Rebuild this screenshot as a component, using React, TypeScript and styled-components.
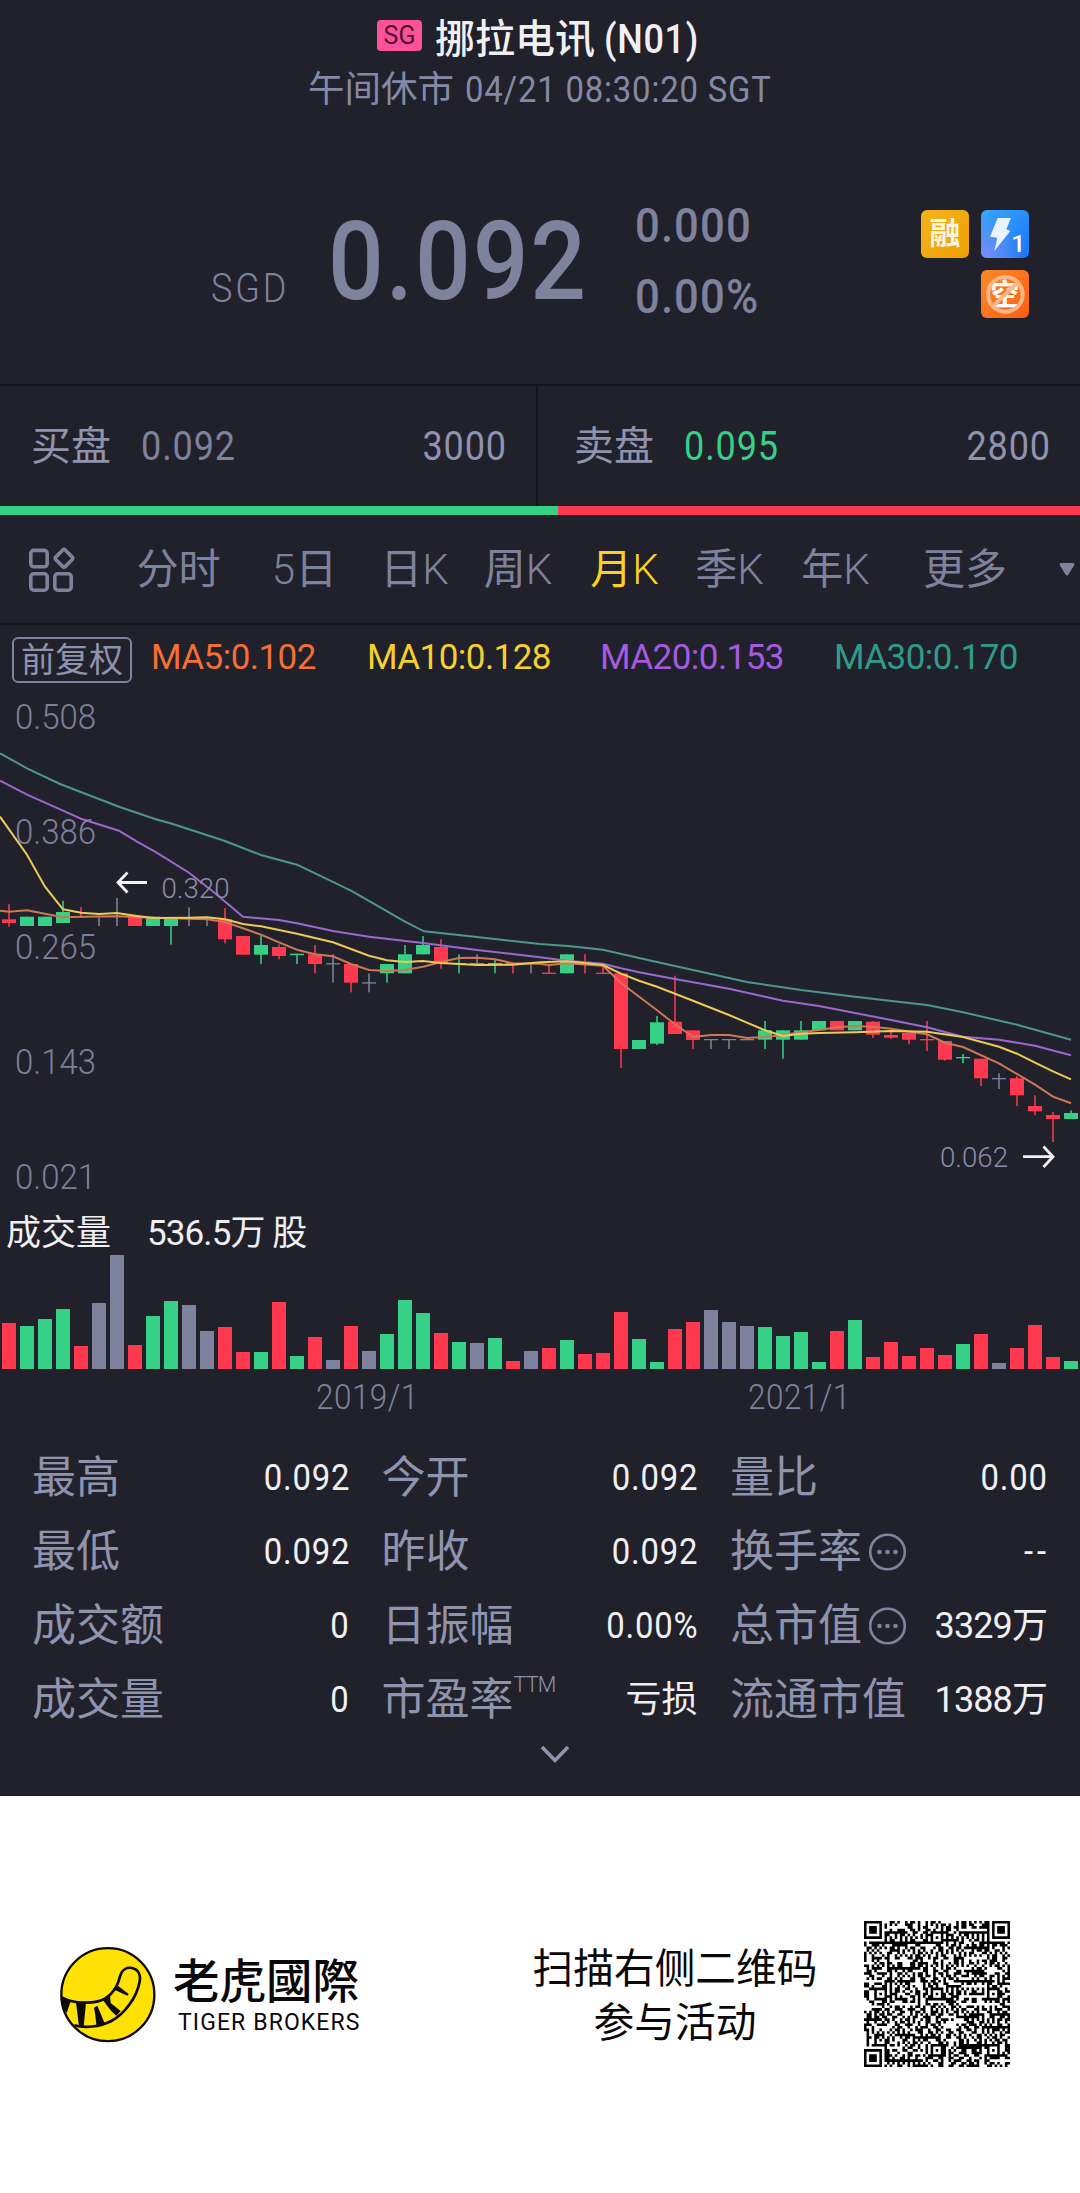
import React from 'react';
import styled, { createGlobalStyle } from 'styled-components';

const colors = {
  bg: '#21212b',
  line: '#15151d',
  muted: '#7f829c',
  label: '#9093ad',
  text: '#f0f0f2',
  up: '#36d086',
  down: '#ff3a50',
  yellow: '#fbd022',
  ma5: '#f26f35',
  ma10: '#f5d02e',
  ma20: '#a45be0',
  ma30: '#2f9c8b',
};

const GlobalStyle = createGlobalStyle`
  body {
    margin: 0;
    background: #fff;
    font-family: Roboto, 'Noto Sans CJK SC', sans-serif;
  }
`;

const Page = styled.div`
  width: 1080px;
  height: 2193px;
  display: flex;
  flex-direction: column;
  overflow: hidden;
  background: #fff;
`;

const Panel = styled.main`
  height: 1796px;
  flex: none;
  display: flex;
  flex-direction: column;
  background: ${colors.bg};
  color: ${colors.muted};
`;

// Narrow figures: squeezed a little and spaced out again
const Digits = styled.span<{ $origin?: string }>`
  display: inline-block;
  transform: scaleX(0.9);
  transform-origin: ${(props) => props.$origin || 'left'} center;
  letter-spacing: 0.025em;
  margin-right: ${(props) => (props.$origin === 'right' ? '-0.025em' : '0')};
`;

/* header */
const Header = styled.header`
  height: 372px;
  flex: none;
  padding-top: 12px;
  border-bottom: 2px solid ${colors.line};
`;
const TitleRow = styled.div`
  display: flex;
  height: 55px;
  padding-left: 377px;
`;
const Market = styled.span`
  width: 45px;
  height: 31px;
  margin: 8px 13px 0 0;
  border-radius: 4px;
  background: #ff5199;
  color: #4d1233;
  font-size: 25px;
  line-height: 31px;
  text-align: center;
`;
const Title = styled.h1`
  display: flex;
  margin: 0;
  font-size: 40px;
  font-weight: 500;
  line-height: 56px;
  color: ${colors.text};
  white-space: pre;
`;
const Code = styled(Digits)`
  margin-left: 9px;
  letter-spacing: 0.02em;
`;
const Status = styled.div`
  padding-left: 308px;
  font-size: 36.5px;
  line-height: 46px;
  color: #8689a5;
  white-space: nowrap;
`;
const StatusTime = styled(Digits)`
  margin-left: 11px;
  letter-spacing: 0.025em;
`;
const Quote = styled.div`
  display: flex;
  align-items: flex-start;
  padding: 77px 51px 0 211px;
`;
const Currency = styled.div`
  width: 117px;
  margin-top: 79px;
  font-size: 40px;
  line-height: 40px;
  font-weight: 300;
`;
const CurrencyCode = styled(Digits)`
  letter-spacing: 0.08em;
`;
const Price = styled.div`
  width: 307px;
  font-size: 109px;
  font-weight: 500;
  line-height: 145px;
`;
const PriceValue = styled(Digits)`
  letter-spacing: 0.02em;
`;
const Changes = styled.div`
  font-size: 48.5px;
  font-weight: 500;
  line-height: 71px;
`;
const Tags = styled.div`
  display: grid;
  grid-template-columns: 48px 48px;
  grid-auto-rows: 48px;
  gap: 12px;
  margin: 20px 0 0 auto;
`;
const Tag = styled.div<{ $from: string; $to: string; $second?: boolean }>`
  grid-column: ${(props) => (props.$second ? 2 : 'auto')};
  border-radius: 6px;
  overflow: hidden;
  background: linear-gradient(135deg, ${(props) => props.$from}, ${(props) => props.$to});
  color: #fff8e0;
  font-size: 31px;
  font-weight: 700;
  line-height: 48px;
  text-align: center;

  svg {
    display: block;
  }
`;

/* bid and ask */
const Depth = styled.section`
  display: grid;
  grid-template-columns: 536px 542px;
  gap: 2px;
  height: 120px;
  background: ${colors.line};
`;
const DepthSide = styled.div<{ $left: number; $right: number }>`
  display: flex;
  align-items: center;
  padding: 0 ${(props) => props.$right}px 7px ${(props) => props.$left}px;
  background: ${colors.bg};
  color: ${colors.label};
  font-size: 40px;
`;
const DepthPrice = styled(Digits)<{ $color: string }>`
  margin: 8px 0 0 30px;
  color: ${(props) => props.$color};
`;
const DepthSize = styled(Digits)`
  margin-top: 8px;
  margin-left: auto;
`;
const DepthBar = styled.div`
  display: grid;
  grid-template-columns: 558px 522px;
  height: 9px;
  flex: none;
`;
const DepthFill = styled.div<{ $color: string }>`
  background: ${(props) => props.$color};
`;

/* period tabs */
const Tabs = styled.nav`
  display: grid;
  grid-template-columns: 102px 153px 99px 121px 86px 127px 83px 129px 130px 50px;
  align-items: center;
  height: 108px;
  flex: none;
  border-bottom: 2px solid ${colors.line};
`;
const Tab = styled.button<{ $active?: boolean }>`
  border: none;
  padding: 2px 0 0;
  background: none;
  font-family: inherit;
  font-size: 42px;
  line-height: 60px;
  white-space: nowrap;
  color: ${(props) => (props.$active ? colors.yellow : colors.muted)};
`;
const Thin = styled.span`
  font-weight: 300;
`;
const GridIcon = styled.svg`
  margin-left: 28px;
`;
const MoreArrow = styled.svg`
  margin-left: 29px;
`;

/* moving averages */
const Averages = styled.div`
  display: grid;
  grid-template-columns: 139px 216px 233px 234px auto;
  align-items: center;
  height: 65px;
  flex: none;
  padding-left: 12px;
  font-size: 35px;
  letter-spacing: -0.55px;
  white-space: nowrap;
`;
const Adjust = styled.span`
  width: 116px;
  height: 42px;
  margin-top: 5px;
  border: 2px solid ${colors.muted};
  border-radius: 6px;
  color: ${colors.label};
  font-size: 34px;
  line-height: 43px;
  letter-spacing: 0;
  text-align: center;
`;
const Average = styled.span<{ $color: string }>`
  color: ${(props) => props.$color};
`;

/* charts */
const PriceChart = styled.svg`
  display: block;
  flex: none;
`;
const VolumeTitle = styled.div`
  display: flex;
  gap: 36px;
  height: 42px;
  flex: none;
  padding-left: 6px;
  font-size: 35px;
  line-height: 44px;
  color: ${colors.text};
`;
const VolumeValue = styled.span`
  letter-spacing: -0.9px;
`;
const VolumeRow = styled.div`
  display: flex;
  align-items: flex-end;
  gap: 4px;
  height: 115px;
  flex: none;
  padding: 0 2px;
`;
const VolumeBar = styled.div<{ $color: string }>`
  width: 14px;
  background: ${(props) => props.$color};
`;
const Dates = styled.div`
  display: flex;
  flex: none;
  height: 72px;
  padding: 9px 0 0 316px;
  gap: 317px;
  box-sizing: border-box;
  font-size: 35px;
  font-weight: 300;
  line-height: 40px;
`;
const DateLabel = styled(Digits)`
  width: 115px;
  letter-spacing: 0.015em;
`;

/* statistics */
const Stats = styled.section`
  display: grid;
  grid-template-columns: 317px 316px 317px;
  grid-auto-rows: 74px;
  column-gap: 32.5px;
  padding-left: 32px;
`;
const Stat = styled.div`
  display: flex;
  align-items: center;
  color: ${colors.label};
  font-size: 44px;
  line-height: 74px;
  white-space: nowrap;
`;
const StatValue = styled(Digits)`
  margin-left: auto;
  color: ${colors.text};
  font-size: 36.5px;
`;
const Dashes = styled(StatValue)`
  letter-spacing: 0.12em;
  margin-right: -0.08em;
`;
const StatText = styled.span`
  margin-left: auto;
  color: ${colors.text};
  font-size: 36px;
`;
const StatMixed = styled.span`
  margin-left: auto;
  color: ${colors.text};
  font-size: 36px;
  letter-spacing: -0.9px;
`;
const Sup = styled.span`
  align-self: flex-start;
  margin-top: 6px;
  font-size: 21.5px;
  line-height: 32px;
  letter-spacing: -0.8px;
  font-weight: 300;
`;
const InfoIcon = styled.svg`
  margin-left: 6px;
`;
const Expand = styled.svg`
  display: block;
  margin: 5px 0 0 538px;
`;

/* footer */
const Footer = styled.footer`
  display: flex;
  height: 397px;
  box-sizing: border-box;
  padding: 125px 70px 0 58px;
  color: #0a0808;
`;
const LogoMark = styled.svg`
  margin-top: 24px;
`;
const Brand = styled.div`
  width: 187px;
  margin: 28px 0 0 15px;
`;
const BrandName = styled.div`
  font-family: 'Noto Sans CJK TC', sans-serif;
  font-size: 46.5px;
  font-weight: 500;
  line-height: 57px;
  white-space: nowrap;
`;
const BrandLatin = styled.div`
  margin: 4px 0 0 5px;
  font-size: 23px;
  line-height: 26px;
  letter-spacing: 1.1px;
  white-space: nowrap;
`;
const Invite = styled.p`
  width: 290px;
  margin: 21px 0 0 auto;
  font-size: 40.7px;
  line-height: 54px;
  text-align: center;
  white-space: nowrap;
`;
const QrCode = styled.svg`
  margin-left: 44px;
`;

type Kind = 'r' | 'g' | 'n';
const kindColor = { r: colors.down, g: colors.up, n: colors.muted };

// kind, body top, body bottom, wick top, wick bottom, volume
const candles: [Kind, number, number, number, number, number][] = [
  ['r', 229.3, 233, 214.3, 236.7, 45.7],
  ['g', 226.7, 236, 226.7, 236, 42.7],
  ['g', 226.7, 236, 226.7, 236, 49.7],
  ['g', 222, 233, 210.7, 233, 59.7],
  ['r', 226, 227.3, 217.3, 227.3, 23],
  ['n', 226, 227, 226, 236, 66],
  ['n', 226, 227, 208, 236, 114],
  ['r', 226.7, 236, 226.7, 236, 23.7],
  ['g', 226.7, 236, 226.7, 236, 52.7],
  ['g', 229, 236, 229, 254.7, 68],
  ['n', 227.5, 228.5, 217.3, 236, 64],
  ['n', 227.5, 228.5, 227.5, 236, 37.7],
  ['r', 229.3, 249.3, 218, 253.3, 42],
  ['r', 246, 264.7, 246, 264.7, 16.7],
  ['g', 255, 264.7, 246, 274, 17.3],
  ['r', 257, 266, 254.3, 269.3, 66.7],
  ['g', 263.7, 265.2, 263.7, 274, 13.3],
  ['r', 264.3, 274, 255, 283.3, 32],
  ['n', 273.2, 274.5, 264.3, 292.7, 9.3],
  ['r', 274, 292.7, 274, 302.3, 42.7],
  ['n', 292.3, 293.6, 283.3, 302.3, 18],
  ['g', 274, 283.3, 274, 292.7, 35.3],
  ['g', 264.3, 283.3, 255, 283.3, 69],
  ['g', 255, 264.3, 246, 264.3, 56],
  ['r', 257, 273.3, 249.3, 278.7, 36],
  ['g', 273, 274, 264.3, 283.3, 27],
  ['n', 273, 274, 264.3, 274, 25.7],
  ['g', 273, 274, 269, 283.3, 31.3],
  ['r', 273, 274, 273, 283.3, 7.7],
  ['n', 273, 274, 273, 283.3, 18],
  ['r', 282.7, 284, 275, 284, 21],
  ['g', 264.3, 283.3, 264.3, 283.3, 29],
  ['r', 273.7, 274.7, 264.3, 283.3, 14.7],
  ['r', 282.7, 284, 275, 284, 16],
  ['r', 283.3, 359, 283.3, 378, 56.7],
  ['g', 350, 359, 350, 359, 29.7],
  ['g', 332.3, 353.7, 326, 355, 6.7],
  ['r', 331.7, 344, 285.7, 344, 39.7],
  ['r', 340.3, 350, 340.3, 359, 46.7],
  ['n', 349, 350.2, 349, 359, 59.3],
  ['n', 349, 350.2, 349, 359, 47],
  ['n', 349, 350.3, 349, 350.3, 43],
  ['g', 340.3, 349.7, 331, 359, 41.7],
  ['g', 340.3, 349.7, 340.3, 368.7, 32.7],
  ['g', 340.3, 349.7, 331, 349.7, 36.7],
  ['g', 331, 340.3, 331, 340.3, 6.7],
  ['r', 331, 340.3, 331, 340.3, 37.7],
  ['g', 331, 340.3, 331, 340.3, 48.7],
  ['r', 331.7, 344.7, 331, 348, 12],
  ['r', 345, 347.7, 341.7, 349, 26.7],
  ['r', 342.7, 349.7, 342.7, 354.3, 13],
  ['r', 349, 350.3, 331, 361, 21],
  ['r', 351, 369.7, 351, 370.7, 14],
  ['g', 367, 368.3, 364, 373.3, 24.7],
  ['r', 368.7, 388.3, 368.7, 396, 34.7],
  ['n', 388, 389.3, 383.3, 399, 6.3],
  ['r', 388.3, 405.3, 386, 416, 20.7],
  ['r', 416, 421.3, 405.3, 425.3, 43.7],
  ['r', 425, 429, 422, 452, 11.7],
  ['g', 423, 429, 420.3, 429, 8],
];

const averageLines = [
  {
    color: '#4b978f',
    points:
      '0,63.3 27,78.3 60,94 119,116.7 155,129 172,133.7 225,151 261,165 297,174.7 351,200.7 405,231.7 424,241.3 477,247 540,254 568,256 603,259.7 639,268 693,280 747,292 801,300 855,306.7 909,313 927,315 963,322.3 1017,334.7 1071,349.7',
  },
  {
    color: '#9b68cf',
    points:
      '0,90.7 27,104.7 63,120.7 81,128.7 119,140.7 137,151.7 155,161.7 189,182.7 216,204 243,226.7 279,230 297,233.3 333,241 369,246.7 423,253 477,260 540,267.3 567,270.7 603,273.7 621,278.3 639,282.3 675,289 693,292.3 729,298.7 765,306.7 783,310.7 819,316 855,323 891,330 927,337.3 963,346.7 999,349.7 1035,355.7 1071,365.3',
  },
  {
    color: '#ce7755',
    points:
      '0,220.7 9,221.7 27,220.3 63,227.3 81,226.7 117,226.3 153,227.7 207,229.3 225,232 243,238.3 261,244.7 279,252.3 297,259.7 315,264.3 333,266.3 351,274 369,280 387,281 405,280 423,276.7 441,272 459,268 477,267.7 495,269.3 513,273.3 540,273.7 549,275 567,273.3 603,275.7 621,293 657,320.3 675,334.3 693,347 711,345 729,345 747,348 765,347 783,345 801,342.3 819,340 837,337.3 855,336 873,336.7 891,338.7 927,344.3 945,352.7 963,357 999,373.3 1035,394.7 1053,406.7 1071,413.3',
  },
  {
    color: '#ecca55',
    points:
      '0,126.7 27,164.7 45,196.7 63,219.3 81,222.7 99,224 117,223 135,225.7 153,228 189,227.7 207,227.3 225,229.3 243,234 261,236.3 297,243.7 333,252.3 369,265.7 387,270.3 405,272 423,271 441,273 477,275 513,274.7 540,272.3 567,271.3 603,275 621,283.7 639,290.7 657,296.7 693,310.7 729,325 765,340.3 783,346 801,343.7 819,343 855,342.3 891,341 927,341.7 963,347 999,356.7 1017,363.7 1035,372.7 1053,381.3 1071,389.3',
  },
];

const axis = ['0.508', '0.386', '0.265', '0.143', '0.021'];

const CandleChart = () => (
  <PriceChart width="1080" height="522" viewBox="0 0 1080 522">
    <g fill="#7d809a" fontSize="35" fontWeight="300">
      {axis.map((value, i) => (
        <text key={value} x="15" y={39 + i * 115} textLength="81" lengthAdjust="spacingAndGlyphs">
          {value}
        </text>
      ))}
    </g>
    {candles.map(([kind, top, bottom, high, low], i) => (
      <g key={i} fill={kindColor[kind]}>
        <rect x={2 + i * 18} y={top} width="14" height={bottom - top} />
        <rect x={8.1 + i * 18} y={high} width="1.8" height={low - high} opacity="0.85" />
      </g>
    ))}
    {averageLines.map((line) => (
      <polyline key={line.color} points={line.points} fill="none" stroke={line.color} strokeWidth="2" />
    ))}
    <g fill="#8b8ea8" fontSize="28" fontWeight="300">
      <text x="161.5" y="208" textLength="68" lengthAdjust="spacingAndGlyphs">
        0.320
      </text>
      <text x="940" y="476.7" textLength="68" lengthAdjust="spacingAndGlyphs">
        0.062
      </text>
    </g>
    <g fill="none" stroke="#f2f2f2" strokeWidth="2.8">
      <path d="M147 192.5H118M127.5 182.5L118 192.5L127.5 202.5" />
      <path d="M1023 466.7H1053M1043.5 456.5L1053 466.7L1043.5 477" />
    </g>
  </PriceChart>
);

const QR_SIZE = 57;

const finder = (x: number, y: number, left: number, top: number) => {
  const d = Math.max(Math.abs(x - left - 3), Math.abs(y - top - 3));
  return d === 3 || d < 2;
};

const qrPath = () => {
  let seed = 20210421;
  let path = '';
  const marks = [6, 28, 50];
  for (let y = 0; y < QR_SIZE; y++) {
    for (let x = 0; x < QR_SIZE; x++) {
      seed = (seed * 1103515245 + 12345) % 2147483648;
      let dark = ((seed >> 12) & 1) === 1;
      const right = x > QR_SIZE - 9;
      const low = y > QR_SIZE - 9;
      if (x === 6 || y === 6) dark = (x + y) % 2 === 0;
      marks.forEach((mx) =>
        marks.forEach((my) => {
          const d = Math.max(Math.abs(x - mx), Math.abs(y - my));
          if (d < 3) dark = d !== 1;
        }),
      );
      if (x < 8 && y < 8) dark = finder(x, y, 0, 0);
      else if (right && y < 8) dark = finder(x, y, QR_SIZE - 7, 0);
      else if (x < 8 && low) dark = finder(x, y, 0, QR_SIZE - 7);
      if (dark) path += `M${x} ${y}h1v1h-1z`;
    }
  }
  return path;
};

const DotsIcon = () => (
  <InfoIcon width="38" height="38" viewBox="0 0 38 38" fill={colors.muted}>
    <circle cx="19.5" cy="19" r="17.3" fill="none" stroke={colors.muted} strokeWidth="2.6" />
    <circle cx="11.5" cy="19" r="2.3" />
    <circle cx="19.5" cy="19" r="2.3" />
    <circle cx="27.5" cy="19" r="2.3" />
  </InfoIcon>
);

const TigerLogo = () => (
  <LogoMark width="100" height="100" viewBox="54 74 300 300">
    <circle cx="203.5" cy="223" r="139.5" fill="#ffe103" stroke="#0d0a05" strokeWidth="7" />
    <path
      d="M66 232C100 250 165 253 196 234C222 218 232 198 240 168C246 146 262 140 276 143C294 147 303 162 299 184C290 230 256 280 214 302C178 320 134 324 103 315"
      fill="none"
      stroke="#0d0a05"
      strokeWidth="8"
    />
    <g fill="#0d0a05">
      <path d="M64 226L92 243L80 278L70 262Z" />
      <path d="M108 246L138 247L131 319L117 319Z" />
      <path d="M162 262L172 256L194 309L169 314L166 285Z" />
      <path d="M188 238L210 225L212 248L242 272L229 286L214 273Z" />
      <path d="M219 206L231 194L266 221L262 226Z" />
    </g>
  </LogoMark>
);

const App = () => (
  <Page>
    <GlobalStyle />
    <Panel>
      <Header>
        <TitleRow>
          <Market>SG</Market>
          <Title>
            挪拉电讯<Code>(N01)</Code>
          </Title>
        </TitleRow>
        <Status>
          午间休市
          <StatusTime>04/21 08:30:20 SGT</StatusTime>
        </Status>
        <Quote>
          <Currency>
            <CurrencyCode>SGD</CurrencyCode>
          </Currency>
          <Price>
            <PriceValue>0.092</PriceValue>
          </Price>
          <Changes>
            <div>
              <Digits>0.000</Digits>
            </div>
            <div>
              <Digits>0.00%</Digits>
            </div>
          </Changes>
          <Tags>
            <Tag $from="#f6b31c" $to="#eda003">
              融
            </Tag>
            <Tag $from="#3aa5ff" $to="#1877f5">
              <svg width="48" height="48" viewBox="0 0 144 144">
                <defs>
                  <radialGradient id="glow" cx="0" cy="1" r="0.9">
                    <stop offset="0" stopColor="#7d8cf5" />
                    <stop offset="1" stopColor="#7d8cf5" stopOpacity="0" />
                  </radialGradient>
                </defs>
                <rect width="144" height="144" fill="url(#glow)" />
                <path d="M50 24H90L76 58L88 63L40 123L49 83L27 80Z" fill="#e9f4ff" />
                <text x="91" y="126" fontSize="74" fontWeight="500" fill="#fff">
                  1
                </text>
              </svg>
            </Tag>
            <Tag $from="#fb8a25" $to="#fb5f17" $second>
              <svg width="48" height="48" viewBox="0 0 144 144">
                <text x="72" y="106" fontSize="88" fontWeight="700" textAnchor="middle" fill="#fff">
                  空
                </text>
                <g fill="none" stroke="#ffb787" strokeWidth="12">
                  <circle cx="73" cy="73" r="52" />
                  <path d="M110 38L36 108" />
                </g>
              </svg>
            </Tag>
          </Tags>
        </Quote>
      </Header>

      <Depth>
        <DepthSide $left={31} $right={30}>
          买盘
          <DepthPrice $color={colors.muted}>0.092</DepthPrice>
          <DepthSize $origin="right">3000</DepthSize>
        </DepthSide>
        <DepthSide $left={36} $right={30}>
          卖盘
          <DepthPrice $color={colors.up}>0.095</DepthPrice>
          <DepthSize $origin="right">2800</DepthSize>
        </DepthSide>
      </Depth>
      <DepthBar>
        <DepthFill $color={colors.up} />
        <DepthFill $color={colors.down} />
      </DepthBar>

      <Tabs>
        <GridIcon width="48" height="48" viewBox="0 0 48 48" fill="none" stroke={colors.muted} strokeWidth="3.6">
          <rect x="2.8" y="5.4" width="16.4" height="16.4" rx="3" />
          <rect x="2.8" y="28.8" width="16.4" height="16.4" rx="3" />
          <rect x="26.8" y="28.8" width="16.4" height="16.4" rx="3" />
          <rect x="29.3" y="6.6" width="13.4" height="13.4" rx="2" transform="rotate(45 36 13.3)" />
        </GridIcon>
        <Tab>分时</Tab>
        <Tab>
          <Thin>5</Thin>日
        </Tab>
        <Tab>
          日<Thin>K</Thin>
        </Tab>
        <Tab>
          周<Thin>K</Thin>
        </Tab>
        <Tab $active>
          月<Thin>K</Thin>
        </Tab>
        <Tab>
          季<Thin>K</Thin>
        </Tab>
        <Tab>
          年<Thin>K</Thin>
        </Tab>
        <Tab>更多</Tab>
        <MoreArrow width="16" height="13" viewBox="0 0 16 13" fill={colors.muted}>
          <path d="M1.5 0H14.5Q16 1 15 2.5L9.5 11.5Q8 13.5 6.5 11.5L1 2.5Q0 1 1.5 0Z" />
        </MoreArrow>
      </Tabs>

      <Averages>
        <Adjust>前复权</Adjust>
        <Average $color={colors.ma5}>MA5:0.102</Average>
        <Average $color={colors.ma10}>MA10:0.128</Average>
        <Average $color={colors.ma20}>MA20:0.153</Average>
        <Average $color={colors.ma30}>MA30:0.170</Average>
      </Averages>

      <CandleChart />

      <VolumeTitle>
        <span>成交量</span>
        <VolumeValue>536.5万 股</VolumeValue>
      </VolumeTitle>
      <VolumeRow>
        {candles.map(([kind, , , , , volume], i) => (
          <VolumeBar key={i} $color={kindColor[kind]} style={{ height: volume }} />
        ))}
      </VolumeRow>
      <Dates>
        <DateLabel>2019/1</DateLabel>
        <DateLabel>2021/1</DateLabel>
      </Dates>

      <Stats>
        <Stat>
          最高<StatValue $origin="right">0.092</StatValue>
        </Stat>
        <Stat>
          今开<StatValue $origin="right">0.092</StatValue>
        </Stat>
        <Stat>
          量比<StatValue $origin="right">0.00</StatValue>
        </Stat>
        <Stat>
          最低<StatValue $origin="right">0.092</StatValue>
        </Stat>
        <Stat>
          昨收<StatValue $origin="right">0.092</StatValue>
        </Stat>
        <Stat>
          换手率
          <DotsIcon />
          <Dashes $origin="right">--</Dashes>
        </Stat>
        <Stat>
          成交额<StatValue $origin="right">0</StatValue>
        </Stat>
        <Stat>
          日振幅<StatValue $origin="right">0.00%</StatValue>
        </Stat>
        <Stat>
          总市值
          <DotsIcon />
          <StatMixed>3329万</StatMixed>
        </Stat>
        <Stat>
          成交量<StatValue $origin="right">0</StatValue>
        </Stat>
        <Stat>
          市盈率<Sup>TTM</Sup>
          <StatText>亏损</StatText>
        </Stat>
        <Stat>
          流通市值<StatMixed>1388万</StatMixed>
        </Stat>
      </Stats>
      <Expand width="34" height="26" viewBox="0 0 34 26" fill="none" stroke={colors.label} strokeWidth="3.6">
        <path d="M4 5L17 18.500L30 5" />
      </Expand>
    </Panel>

    <Footer>
      <TigerLogo />
      <Brand>
        <BrandName>老虎國際</BrandName>
        <BrandLatin>TIGER BROKERS</BrandLatin>
      </Brand>
      <Invite>
        扫描右侧二维码
        <br />
        参与活动
      </Invite>
      <QrCode width="146" height="146" viewBox="0 0 57 57">
        <path d={qrPath()} fill="#000" />
      </QrCode>
    </Footer>
  </Page>
);

export default App;
